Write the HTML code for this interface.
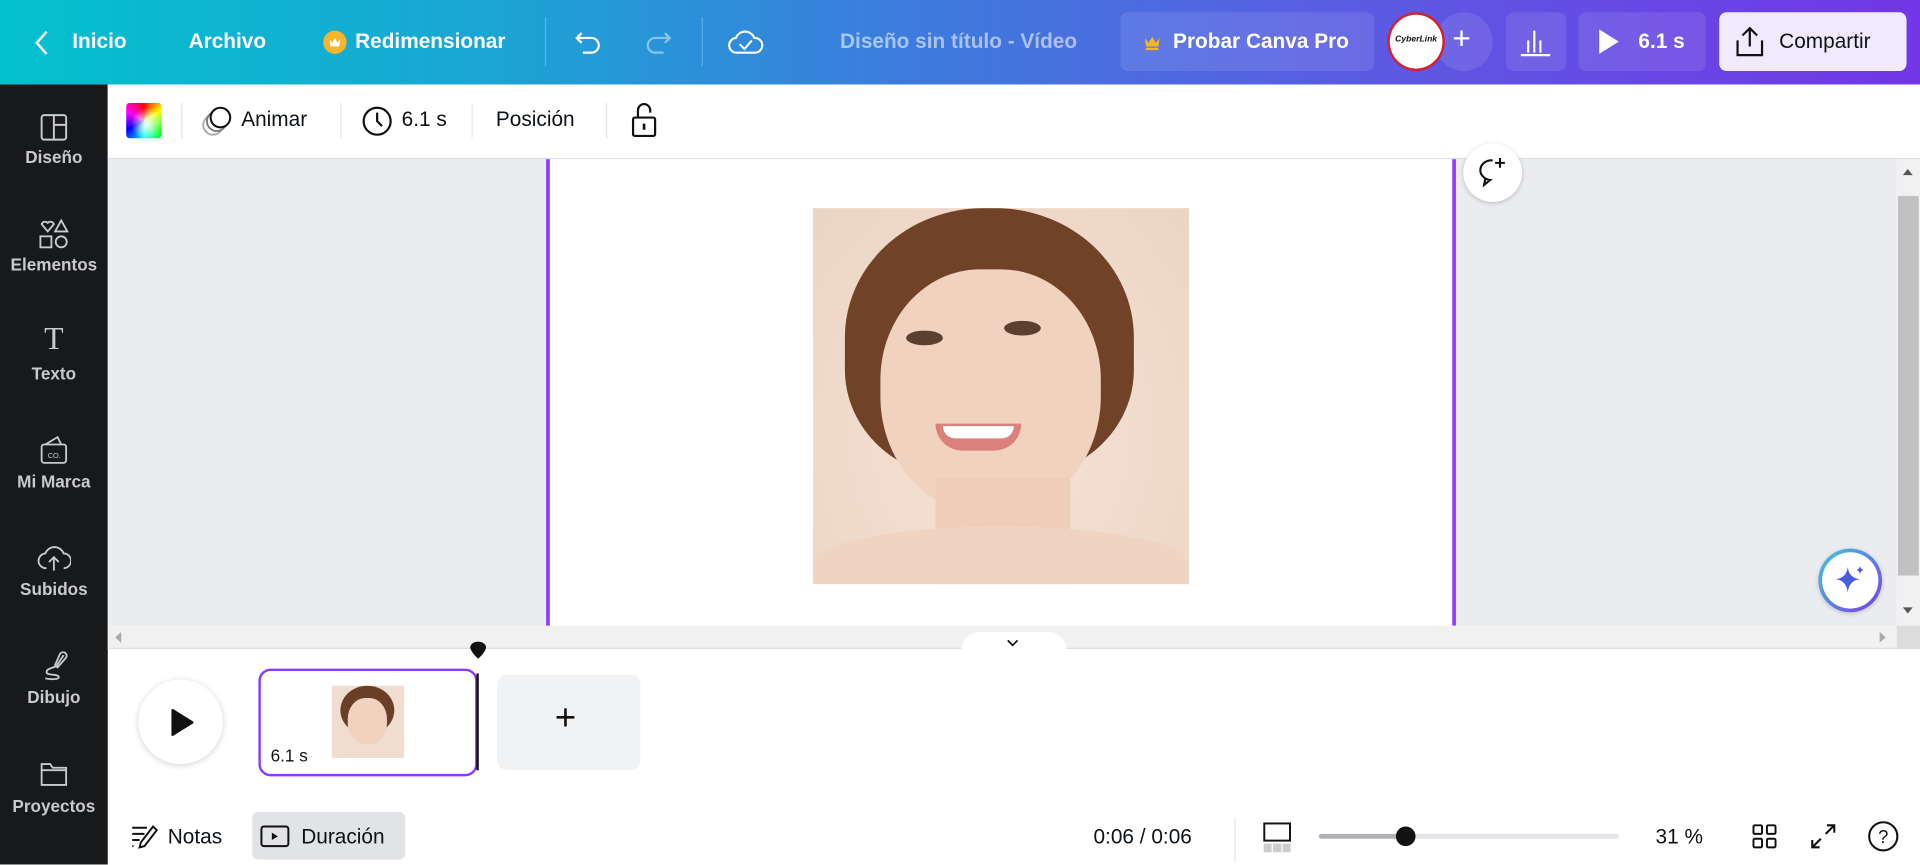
<!DOCTYPE html>
<html><head><meta charset="utf-8">
<style>
*{box-sizing:border-box;margin:0;padding:0}
html,body{width:1920px;height:864px;overflow:hidden;background:#fff;font-family:"Liberation Sans",sans-serif}
#s{position:absolute;left:0;top:0;width:1568px;height:706px;transform:scale(1.22449);transform-origin:0 0}
.a{position:absolute}
.top{left:0;top:0;width:1568px;height:69px;background:linear-gradient(90deg,#03c1cd 0%,#1aa6d4 25%,#3a7fdc 45%,#5a5ce2 70%,#7236e6 100%)}
.tw{color:#fff;font-weight:bold;font-size:17px;top:24px}
.sb{left:0;top:69px;width:88px;height:637px;background:#18191b}
.sl{width:88px;text-align:center;color:#c9cacc;font-weight:bold;font-size:14px}
.dv{width:1px;background:#e3e4e6}
.tb{font-size:17px;color:#0d1216;top:88px}
</style></head><body><div id="s">
<div class="a top"></div>
<svg class="a" style="left:26px;top:23px" width="16" height="24"><path d="M12 3 L4 12 L12 21" stroke="#fff" stroke-width="2" fill="none"/></svg>
<div class="a tw" style="left:59px">Inicio</div>
<div class="a tw" style="left:154px">Archivo</div>
<div class="a" style="left:264px;top:25px;width:19px;height:19px;border-radius:50%;background:#f8b42a"></div>
<svg class="a" style="left:267px;top:28px" width="13" height="13"><path d="M2 4 L4.5 7 L6.5 3 L8.5 7 L11 4 L10 10 L3 10Z" fill="#fff"/></svg>
<div class="a tw" style="left:290px">Redimensionar</div>
<div class="a" style="left:445px;top:14px;width:1px;height:40px;background:rgba(255,255,255,.25)"></div>
<svg class="a" style="left:468px;top:22px" width="26" height="26"><path d="M7 5 L3 9 L7 13 M3 9 H15 A6 6 0 0 1 15 21 H8" stroke="#fff" stroke-width="1.8" fill="none"/></svg>
<svg class="a" style="left:524px;top:22px" width="26" height="26"><path d="M19 5 L23 9 L19 13 M23 9 H11 A6 6 0 0 0 11 21 H18" stroke="rgba(255,255,255,.45)" stroke-width="1.8" fill="none"/></svg>
<div class="a" style="left:573px;top:14px;width:1px;height:40px;background:rgba(255,255,255,.25)"></div>
<svg class="a" style="left:594px;top:21px" width="30" height="26"><path d="M8 22 A6 6 0 0 1 7 10 A8 8 0 0 1 22 10 A6 6 0 0 1 23 22Z M10 15 L14 19 L20 12" stroke="#fff" stroke-width="1.7" fill="none"/></svg>
<div class="a tw" style="left:686px;color:rgba(255,255,255,.55);font-weight:bold">Diseño sin título - Vídeo</div>
<div class="a" style="left:915px;top:10px;width:207px;height:48px;border-radius:6px;background:rgba(255,255,255,.1)"></div>
<svg class="a" style="left:934px;top:28px" width="14" height="13"><path d="M1 3 L4 7 L7 2 L10 7 L13 3 L12 10 L2 10Z M2 11 H12 V13 H2Z" fill="#f8b42a"/></svg>
<div class="a tw" style="left:958px">Probar Canva Pro</div>
<div class="a" style="left:1172px;top:10px;width:47px;height:48px;border-radius:50%;background:rgba(255,255,255,.1)"></div>
<div class="a" style="left:1133px;top:10px;width:47px;height:48px;border-radius:50%;background:#fff;border:2px solid #d5202f"></div>
<div class="a" style="left:1133px;top:29px;width:47px;text-align:center;font-size:7px;font-weight:bold;font-style:italic;color:#111">CyberLink</div>
<div class="a" style="left:1186px;top:16px;color:#fff;font-size:26px">+</div>
<div class="a" style="left:1230px;top:10px;width:49px;height:48px;border-radius:6px;background:rgba(255,255,255,.1)"></div>
<svg class="a" style="left:1240px;top:21px" width="28" height="26"><path d="M2 24 H26 M8 22 V12 M13 22 V4 M18 22 V12" stroke="#fff" stroke-width="1.8"/></svg>
<div class="a" style="left:1289px;top:10px;width:104px;height:48px;border-radius:6px;background:rgba(255,255,255,.1)"></div>
<svg class="a" style="left:1304px;top:23px" width="20" height="22"><path d="M2 1 L18 11 L2 21Z" fill="#fff"/></svg>
<div class="a tw" style="left:1338px">6.1 s</div>
<div class="a" style="left:1404px;top:10px;width:153px;height:48px;border-radius:6px;background:#f1eafd"></div>
<svg class="a" style="left:1416px;top:20px" width="26" height="28"><path d="M13 18 V3 M7 9 L13 3 L19 9 M3 13 V25 H23 V13" stroke="#111" stroke-width="1.8" fill="none"/></svg>
<div class="a tw" style="left:1453px;color:#0d1216;font-weight:normal">Compartir</div>

<div class="a sb"></div>
<svg class="a" style="left:32px;top:92px" width="24" height="24"><rect x="2" y="2" width="20" height="20" rx="2" stroke="#c9cacc" stroke-width="1.6" fill="none"/><path d="M12 2 V22 M12 10 H22" stroke="#c9cacc" stroke-width="1.6"/></svg>
<div class="a sl" style="top:120px">Diseño</div>
<svg class="a" style="left:30px;top:178px" width="28" height="26"><path d="M4 5 A3 3 0 0 1 9 4 A3 3 0 0 1 14 5 L9 11Z" stroke="#c9cacc" stroke-width="1.5" fill="none"/><path d="M20 2 L25 11 H15Z" stroke="#c9cacc" stroke-width="1.5" fill="none"/><rect x="3" y="15" width="9" height="9" stroke="#c9cacc" stroke-width="1.5" fill="none"/><circle cx="20" cy="19.5" r="4.5" stroke="#c9cacc" stroke-width="1.5" fill="none"/></svg>
<div class="a sl" style="top:208px">Elementos</div>
<div class="a sl" style="top:262px;font-size:26px;font-weight:normal;font-family:'Liberation Serif',serif">T</div>
<div class="a sl" style="top:297px">Texto</div>
<svg class="a" style="left:32px;top:355px" width="24" height="26"><rect x="2" y="8" width="20" height="15" rx="2" stroke="#c9cacc" stroke-width="1.5" fill="none"/><path d="M5 8 L15 2 L18 8" stroke="#c9cacc" stroke-width="1.5" fill="none"/><text x="7" y="19" font-size="6" fill="#c9cacc" font-family="Liberation Sans">CO.</text></svg>
<div class="a sl" style="top:385px">Mi Marca</div>
<svg class="a" style="left:30px;top:444px" width="28" height="24"><path d="M8 20 A6 6 0 0 1 7 8 A8 8 0 0 1 22 8 A6 6 0 0 1 22 20 M14 22 V11 M10 15 L14 11 L18 15" stroke="#c9cacc" stroke-width="1.5" fill="none"/></svg>
<div class="a sl" style="top:473px">Subidos</div>
<svg class="a" style="left:32px;top:532px" width="24" height="24"><path d="M20 3 L14 12 M14 12 C10 14 6 14 6 17 C6 20 16 18 16 21 C16 23 10 23 5 22" stroke="#c9cacc" stroke-width="1.5" fill="none"/><path d="M17 2 A2 2 0 0 1 22 5 L15 13 L13 11Z" stroke="#c9cacc" stroke-width="1.5" fill="none"/></svg>
<div class="a sl" style="top:561px">Dibujo</div>
<svg class="a" style="left:32px;top:621px" width="24" height="22"><path d="M2 3 H9 L11 6 H22 V20 H2Z M2 8 H22" stroke="#c9cacc" stroke-width="1.5" fill="none"/></svg>
<div class="a sl" style="top:650px">Proyectos</div>

<div class="a" style="left:88px;top:69px;width:1480px;height:61px;background:#fff;border-bottom:1px solid #dcdde0"></div>
<div class="a" style="left:103px;top:84px;width:29px;height:29px;border-radius:3px;background:radial-gradient(circle at 60% 60%,#fff 0%,rgba(255,255,255,0) 55%),conic-gradient(from 0deg,#f00,#ff0,#0f0,#0ff,#00f,#f0f,#f00)"></div>
<div class="a dv" style="left:148px;top:84px;height:29px"></div>
<svg class="a" style="left:163px;top:85px" width="30" height="28"><circle cx="11" cy="17" r="8" stroke="#aaa" stroke-width="1.5" fill="none"/><circle cx="14" cy="14" r="8" stroke="#777" stroke-width="1.5" fill="#fff"/><circle cx="17" cy="11" r="8" stroke="#111" stroke-width="1.7" fill="#fff"/></svg>
<div class="a tb" style="left:197px">Animar</div>
<div class="a dv" style="left:278px;top:84px;height:29px"></div>
<svg class="a" style="left:294px;top:85px" width="28" height="28"><circle cx="14" cy="14" r="11" stroke="#111" stroke-width="1.8" fill="none"/><path d="M14 7 V14 L18 18" stroke="#111" stroke-width="1.8" fill="none"/></svg>
<div class="a tb" style="left:328px">6.1 s</div>
<div class="a dv" style="left:385px;top:84px;height:29px"></div>
<div class="a tb" style="left:405px">Posición</div>
<div class="a dv" style="left:495px;top:84px;height:29px"></div>
<svg class="a" style="left:513px;top:83px" width="26" height="30"><path d="M8 13 V7 A5 5 0 0 1 18 7 V9" stroke="#111" stroke-width="1.8" fill="none"/><rect x="4" y="13" width="18" height="15" rx="1.5" stroke="#111" stroke-width="1.8" fill="none"/><path d="M13 18 V23" stroke="#111" stroke-width="2.2"/></svg>

<div class="a" style="left:88px;top:130px;width:1461px;height:381px;background:#ebecf0"></div>
<div class="a" style="left:446px;top:130px;width:743px;height:381px;background:#fff;border-left:3px solid #8b3dff;border-right:3px solid #8b3dff"></div>
<div class="a" style="left:664px;top:170px;width:307px;height:307px;background:radial-gradient(ellipse at 50% 60%,#f6e3d6,#ecd4c3);overflow:hidden">
<div class="a" style="left:26px;top:0;width:236px;height:220px;border-radius:48% 48% 40% 40%;background:#704329"></div>
<div class="a" style="left:55px;top:50px;width:180px;height:200px;border-radius:45% 45% 48% 48%;background:#f1d2bf"></div>
<div class="a" style="left:100px;top:220px;width:110px;height:120px;background:#efcdb9"></div>
<div class="a" style="left:76px;top:100px;width:30px;height:12px;border-radius:50%;background:#5b4030"></div>
<div class="a" style="left:156px;top:92px;width:30px;height:12px;border-radius:50%;background:#5b4030"></div>
<div class="a" style="left:100px;top:176px;width:70px;height:22px;border-radius:0 0 40px 40px;background:#d9817a"></div>
<div class="a" style="left:106px;top:178px;width:58px;height:10px;border-radius:0 0 20px 20px;background:#fff"></div>
<div class="a" style="left:0;top:260px;width:307px;height:60px;background:#f0d4c2;border-radius:50% 50% 0 0"></div>
</div>
<div class="a" style="left:1195px;top:117px;width:48px;height:48px;border-radius:50%;background:#fff;box-shadow:0 1px 4px rgba(0,0,0,.2)"></div>
<svg class="a" style="left:1205px;top:127px" width="28" height="28"><path d="M14 4 A9 8 0 1 0 12 20 L7 24 L8 19" stroke="#111" stroke-width="1.7" fill="none"/><path d="M20 2 V10 M16 6 H24" stroke="#111" stroke-width="1.7"/></svg>
<div class="a" style="left:1485px;top:448px;width:52px;height:52px;border-radius:50%;background:linear-gradient(135deg,#3ec8e0,#7b3de8);box-shadow:0 1px 4px rgba(0,0,0,.2)"></div>
<div class="a" style="left:1488px;top:451px;width:46px;height:46px;border-radius:50%;background:#fff"></div>
<svg class="a" style="left:1497px;top:460px" width="28" height="28"><path d="M12 3 Q13 12 22 13 Q13 14 12 24 Q11 14 2 13 Q11 12 12 3Z" fill="#4a5de0"/><path d="M22 2 Q22.5 5 25 5.5 Q22.5 6 22 9 Q21.5 6 19 5.5 Q21.5 5 22 2Z" fill="#4a5de0"/></svg>
<div class="a" style="left:1549px;top:130px;width:19px;height:381px;background:#f1f1f1"></div>
<div class="a" style="left:1550px;top:160px;width:17px;height:310px;background:#c1c1c1"></div>
<svg class="a" style="left:1553px;top:136px" width="10" height="8"><path d="M1 7 L5 2 L9 7Z" fill="#555"/></svg>
<svg class="a" style="left:1553px;top:495px" width="10" height="8"><path d="M1 1 L5 6 L9 1Z" fill="#555"/></svg>
<div class="a" style="left:88px;top:511px;width:1461px;height:19px;background:#f1f1f1;border-bottom:1px solid #dcdde0"></div>
<div class="a" style="left:1549px;top:511px;width:19px;height:19px;background:#dcdcdc"></div>
<svg class="a" style="left:94px;top:516px" width="6" height="9"><path d="M5 0 L0 4.5 L5 9Z" fill="#aaa"/></svg>
<svg class="a" style="left:1535px;top:516px" width="6" height="9"><path d="M0 0 L5 4.5 L0 9Z" fill="#aaa"/></svg>
<div class="a" style="left:785px;top:516px;width:86px;height:15px;background:#fff;border-radius:16px 16px 0 0"></div>
<svg class="a" style="left:822px;top:521px" width="10" height="8"><path d="M1 2 L5 6 L9 2" stroke="#111" stroke-width="1.4" fill="none"/></svg>

<div class="a" style="left:113px;top:555px;width:69px;height:69px;border-radius:50%;background:#fff;box-shadow:0 1px 5px rgba(0,0,0,.18)"></div>
<svg class="a" style="left:138px;top:578px" width="22" height="24"><path d="M3 2 L19 12 L3 22Z" fill="#111" stroke="#111" stroke-linejoin="round" stroke-width="2"/></svg>
<div class="a" style="left:211px;top:546px;width:179px;height:88px;border:2.5px solid #8b3dff;border-radius:10px;background:#fff"></div>
<div class="a" style="left:271px;top:560px;width:59px;height:59px;background:#f1ddd0;overflow:hidden"><div class="a" style="left:7px;top:0;width:44px;height:40px;border-radius:50%;background:#6a3f28"></div><div class="a" style="left:13px;top:10px;width:32px;height:38px;border-radius:45%;background:#f1d2bf"></div></div>
<div class="a" style="left:221px;top:609px;font-size:14px;color:#0d1216">6.1 s</div>
<div class="a" style="left:389px;top:550px;width:2px;height:79px;background:#111"></div>
<svg class="a" style="left:383px;top:524px" width="15" height="15"><path d="M1 5 A6.5 5 0 0 1 14 5 Q13 9 7.5 14 Q2 9 1 5Z" fill="#111"/></svg>
<div class="a" style="left:406px;top:551px;width:117px;height:78px;border-radius:8px;background:#f1f2f4"></div>
<div class="a" style="left:453px;top:570px;font-size:30px;color:#111;font-weight:300">+</div>

<svg class="a" style="left:106px;top:672px" width="24" height="22"><path d="M2 4 H14 M2 9 H12 M2 14 H8 M2 19 H3" stroke="#111" stroke-width="1.6"/><path d="M19 3 L22 6 L12 19 L8 20 L9 16Z" stroke="#111" stroke-width="1.6" fill="none"/></svg>
<div class="a" style="left:137px;top:674px;font-size:17px;color:#0d1216">Notas</div>
<div class="a" style="left:206px;top:663px;width:125px;height:39px;border-radius:5px;background:#e1e3e6"></div>
<svg class="a" style="left:212px;top:673px" width="26" height="20"><rect x="1.5" y="2" width="22" height="16" rx="2" stroke="#111" stroke-width="1.6" fill="none"/><path d="M10 7 L15 10 L10 13Z" fill="#111"/></svg>
<div class="a" style="left:246px;top:674px;font-size:17px;color:#0d1216">Duración</div>
<div class="a" style="left:893px;top:674px;font-size:17px;color:#0d1216">0:06 / 0:06</div>
<div class="a dv" style="left:1008px;top:668px;height:36px"></div>
<svg class="a" style="left:1031px;top:671px" width="25" height="26"><rect x="1.5" y="1.5" width="21" height="14" stroke="#111" stroke-width="1.6" fill="none"/><rect x="1" y="18" width="22" height="7" fill="#ccc"/><path d="M8 18 V25 M16 18 V25" stroke="#fff"/></svg>
<div class="a" style="left:1077px;top:681px;width:71px;height:4px;border-radius:2px;background:#aeb0b5"></div>
<div class="a" style="left:1148px;top:681px;width:174px;height:4px;border-radius:2px;background:#e1e3e6"></div>
<div class="a" style="left:1140px;top:675px;width:16px;height:16px;border-radius:50%;background:#111"></div>
<div class="a" style="left:1352px;top:674px;font-size:17px;color:#0d1216">31 %</div>
<svg class="a" style="left:1430px;top:672px" width="22" height="22"><rect x="2" y="2" width="7" height="7" rx="1" stroke="#111" stroke-width="1.6" fill="none"/><rect x="13" y="2" width="7" height="7" rx="1" stroke="#111" stroke-width="1.6" fill="none"/><rect x="2" y="13" width="7" height="7" rx="1" stroke="#111" stroke-width="1.6" fill="none"/><rect x="13" y="13" width="7" height="7" rx="1" stroke="#111" stroke-width="1.6" fill="none"/></svg>
<svg class="a" style="left:1478px;top:672px" width="22" height="22"><path d="M13 9 L20 2 M14 2 H20 V8 M9 13 L2 20 M2 14 V20 H8" stroke="#111" stroke-width="1.7" fill="none"/></svg>
<svg class="a" style="left:1525px;top:670px" width="26" height="26"><circle cx="13" cy="13" r="11.5" stroke="#111" stroke-width="1.7" fill="none"/><text x="13" y="18.5" text-anchor="middle" font-size="15" font-family="Liberation Sans" fill="#111">?</text></svg>
</div></body></html>
